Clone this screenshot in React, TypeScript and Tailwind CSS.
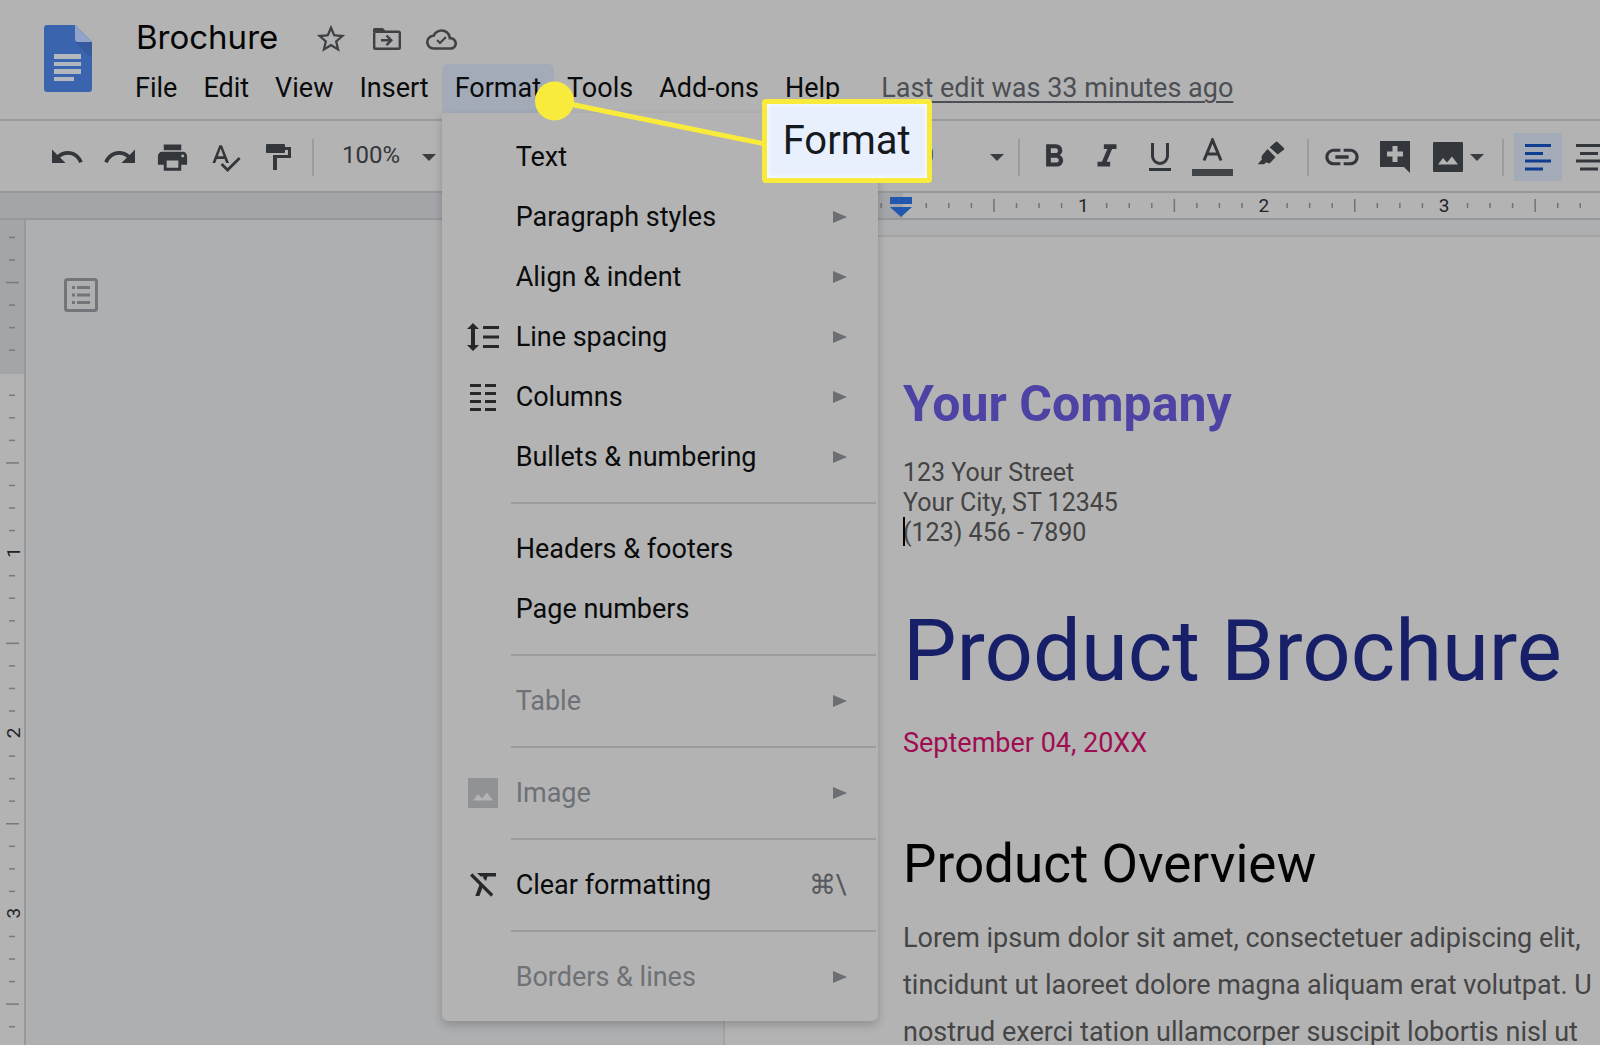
import type { ReactNode } from "react"
import {
  MdCloudQueue,
  MdFormatBold,
  MdFormatItalic,
  MdLink,
  MdPrint,
  MdRedo,
  MdSpellcheck,
  MdStarBorder,
  MdUndo,
} from "react-icons/md"

type MenuEntry =
  | { kind: "separator" }
  | {
      kind: "item"
      label: string
      icon?: ReactNode
      submenu?: boolean
      shortcut?: string
      disabled?: boolean
    }

const INCH = 180.4

function DocsLogo() {
  return (
    <svg width="48" height="67" viewBox="0 0 48 67" aria-hidden>
      <path d="M3 0h28l17 17v47a3 3 0 0 1-3 3H3a3 3 0 0 1-3-3V3a3 3 0 0 1 3-3z" fill="#3b64ae" />
      <path d="M31 17h17v16z" fill="#355a9d" />
      <path d="M31 0l17 17H34a3 3 0 0 1-3-3z" fill="#91a3c9" />
      <path d="M10 29h27v5H10zM10 37h27v4H10zM10 44h27v5H10zM10 52h20v4H10z" fill="#b3b7be" />
    </svg>
  )
}

function MoveFolder() {
  return (
    <svg width="28" height="22" viewBox="0 0 28 22" fill="none" stroke="currentColor" aria-hidden>
      <path d="M1.2 4.500v15q0 1.300 1.300 1.300h23q1.300 0 1.300-1.300V5q0-1.300-1.300-1.300H1.500" strokeWidth="2.400" />
      <path d="M1.500 0H10l2.500 3v1.500H0v-3Q0 0 1.500 0z" fill="currentColor" stroke="none" />
      <path d="M8 12.300h10M13.500 7.500l4.800 4.800-4.800 4.800" strokeWidth="2.400" />
    </svg>
  )
}

function CloudDone() {
  return (
    <span className="relative block">
      <MdCloudQueue size={31} />
      <svg className="absolute inset-0" width="31" height="31" viewBox="0 0 31 31" fill="none" stroke="currentColor" strokeWidth="2">
        <path d="M11 16l3 3 6-6" />
      </svg>
    </span>
  )
}

function ClearFormat() {
  return (
    <svg width="26" height="24" viewBox="0 0 26 24" aria-hidden>
      <path d="M1.200 1.500l21 21" fill="none" stroke="currentColor" strokeWidth="3.200" />
      <path d="M7 0h19v3.600h-8.500L16 8l-3-3 .6-1.400H10.600zM9.800 10.800l3 3L9.400 23H5.300z" fill="currentColor" />
    </svg>
  )
}

function PaintRoller() {
  return (
    <svg width="25" height="27" viewBox="0 0 25 27" aria-hidden>
      <path d="M1 0h17a1 1 0 0 1 1 1v2h6v11H11v12H7V11h15V6h-3v2a1 1 0 0 1-1 1H1a1 1 0 0 1-1-1V1a1 1 0 0 1 1-1z" fill="currentColor" />
    </svg>
  )
}

function Highlighter() {
  return (
    <svg width="28" height="24" viewBox="0 0 28 24" fill="currentColor" aria-hidden>
      <path d="M12.7 6.3L18.6 1q1-.8 2 0l6.2 6q.9.9 0 1.800L20.700 13.600z" />
      <path d="M10.500 8l8 8.200-5.200 5.600q-1.200 1-2.400.3L9.300 21.200l-2.300 2.100H.700L5 18.300q-1-2 .4-4.300z" />
    </svg>
  )
}

function CommentPlus() {
  return (
    <svg width="30" height="32" viewBox="0 0 30 32" aria-hidden>
      <path d="M0 0h30v32l-6-6H0z" fill="currentColor" />
      <path d="M12.500 5h5v5.500H23v5h-5.500V21h-5v-5.500H7v-5h5.500z" fill="#b3b3b3" />
    </svg>
  )
}

function Picture() {
  return (
    <svg width="30" height="30" viewBox="0 0 30 30" aria-hidden>
      <rect width="30" height="30" rx="1" fill="currentColor" />
      <path d="M5 22.500l5-6.500 4 4.500 5-6 6 8z" fill="#b3b3b3" />
    </svg>
  )
}

function LineSpacing() {
  return (
    <svg width="32" height="28" viewBox="0 0 32 28" fill="currentColor" aria-hidden>
      <path d="M6 0l6 6H8v16h4l-6 6-6-6h4V6H0z" />
      <path d="M16 3h16v3H16zM16 12.500h16v3H16zM16 22h16v3H16z" />
    </svg>
  )
}

function Columns() {
  return (
    <svg width="26" height="27" viewBox="0 0 26 27" fill="currentColor" aria-hidden>
      <path d="M0 0h11v3H0zM15 0h11v3H15zM0 8h11v3H0zM15 8h11v3H15zM0 16h11v3H0zM15 16h11v3H15zM0 24h11v3H0zM15 24h11v3H15z" />
    </svg>
  )
}

function Caret() {
  return (
    <svg width="14" height="7" viewBox="0 0 14 7" className="pointer-events-none shrink-0" aria-hidden>
      <path d="M0 0h14L7 7z" fill="#3a3d40" />
    </svg>
  )
}

function Outline() {
  return (
    <svg width="34" height="34" viewBox="0 0 34 34" aria-hidden>
      <rect x="1.500" y="1.500" width="31" height="31" rx="2" fill="none" stroke="currentColor" strokeWidth="3" />
      <path d="M8 8h3v3H8zM13 8h13v3H13zM8 15.500h3v3H8zM13 15.500h13v3H13zM8 23h3v3H8zM13 23h13v3H13z" fill="currentColor" />
    </svg>
  )
}

const ENTRIES: MenuEntry[] = [
  { kind: "item", label: "Text", submenu: true },
  { kind: "item", label: "Paragraph styles", submenu: true },
  { kind: "item", label: "Align & indent", submenu: true },
  { kind: "item", label: "Line spacing", icon: <LineSpacing />, submenu: true },
  { kind: "item", label: "Columns", icon: <Columns />, submenu: true },
  { kind: "item", label: "Bullets & numbering", submenu: true },
  { kind: "separator" },
  { kind: "item", label: "Headers & footers" },
  { kind: "item", label: "Page numbers" },
  { kind: "separator" },
  { kind: "item", label: "Table", submenu: true, disabled: true },
  { kind: "separator" },
  { kind: "item", label: "Image", icon: <Picture />, submenu: true, disabled: true },
  { kind: "separator" },
  { kind: "item", label: "Clear formatting", icon: <ClearFormat />, shortcut: "⌘\\" },
  { kind: "separator" },
  { kind: "item", label: "Borders & lines", submenu: true, disabled: true },
]

function FormatMenu() {
  return (
    <div
      role="menu"
      className="absolute left-0 top-full z-20 w-[436px] rounded-b-md bg-[#b3b3b3] py-[14px] shadow-[0_4px_10px_rgba(0,0,0,0.2)]"
    >
      {ENTRIES.map((entry, index) =>
        entry.kind === "separator" ? (
          <div key={index} className="my-[15px] ml-[69px] mr-[2px] h-[2px] bg-[#9b9c9e]" />
        ) : (
          <button
            key={index}
            type="button"
            role="menuitem"
            disabled={entry.disabled}
            className="flex h-[60px] w-full items-center pr-[31px] text-left text-[#0a0b0c] disabled:text-[#6e7175]"
          >
            <span
              className={[
                "flex w-[74px] shrink-0 justify-center pl-[8px]",
                entry.disabled ? "text-[#909295]" : "text-[#26292b]",
              ].join(" ")}
            >
              {entry.icon}
            </span>
            <span className="flex-1">{entry.label}</span>
            {entry.shortcut && <span className="text-[#55585c]">{entry.shortcut}</span>}
            {entry.submenu && (
              <svg width="14" height="12" viewBox="0 0 14 12" aria-hidden>
                <path d="M0 0l14 6-14 6z" fill="#6b6e72" />
              </svg>
            )}
          </button>
        )
      )}
    </div>
  )
}

/* The yellow dot, leader line and enlarged label that point at the open menu */
function Callout() {
  return (
    <div className="pointer-events-none absolute left-[93px] top-[17px] z-30 h-[104px] w-[397px]">
      <svg className="absolute inset-0" width="240" height="80" viewBox="0 0 240 80" aria-hidden>
        <path d="M20 20l210 43" stroke="#f9eb3c" strokeWidth="5" />
        <circle cx="19.500" cy="20" r="19.500" fill="#f9eb3c" />
      </svg>
      <div className="absolute left-[227px] top-[18px] flex h-[84px] w-[170px] items-center justify-center rounded-sm border-[5px] border-[#f9eb3c] bg-[#e8f0fe] text-[40px] leading-none text-[#16191d] shadow-[inset_0_0_6px_#ffffff]">
        Format
      </div>
    </div>
  )
}

function MenuBar() {
  return (
    <nav className="flex h-[49px] items-stretch whitespace-nowrap text-[27px] text-[#0a0b0c]">
      {["File", "Edit", "View", "Insert"].map((name) => (
        <button key={name} type="button" className="px-[13px]">
          {name}
        </button>
      ))}
      <div className="relative">
        <button type="button" aria-expanded className="h-full rounded-t-md bg-[#a3abb9] px-[13px]">
          Format
        </button>
        <FormatMenu />
        <Callout />
      </div>
      {["Tools", "Add-ons", "Help"].map((name) => (
        <button key={name} type="button" className="px-[13px]">
          {name}
        </button>
      ))}
      <a href="#history" className="ml-[28px] self-center text-[#4c4f53] underline decoration-2 underline-offset-4">
        Last edit was 33 minutes ago
      </a>
    </nav>
  )
}

function Header() {
  return (
    <header className="flex h-[121px] border-b-2 border-[#999a9b] pl-11">
      <div className="pt-[25px]">
        <DocsLogo />
      </div>
      <div className="ml-[30px] flex flex-col pt-[14px]">
        <div className="flex h-[50px] items-center pl-[14px]">
          <h1 className="pb-1 font-[Inter] text-[33px] leading-none text-[#050505]">Brochure</h1>
          <div className="ml-9 flex items-center gap-[25px] text-[#3f4245]">
            <button type="button" aria-label="Star">
              <MdStarBorder size={34} />
            </button>
            <button type="button" aria-label="Move">
              <MoveFolder />
            </button>
            <button type="button" aria-label="Saved to Drive">
              <CloudDone />
            </button>
          </div>
        </div>
        <MenuBar />
      </div>
    </header>
  )
}

function Tool({ label, children }: { label: string; children: ReactNode }) {
  return (
    <button type="button" aria-label={label} className="flex h-12 w-[53px] shrink-0 items-center justify-center">
      {children}
    </button>
  )
}

function Divider() {
  return <div className="h-[37px] w-[2px] shrink-0 bg-[#9b9c9e]" />
}

function Toolbar() {
  return (
    <div className="flex h-[72px] items-center overflow-hidden border-b-2 border-[#97989a] pl-10 pt-[2px] text-[#33363a]">
      <Tool label="Undo"><MdUndo size={36} /></Tool>
      <Tool label="Redo"><MdRedo size={36} /></Tool>
      <Tool label="Print"><MdPrint size={35} /></Tool>
      <Tool label="Spelling and grammar check"><MdSpellcheck size={33} /></Tool>
      <Tool label="Paint format"><PaintRoller /></Tool>
      <div className="ml-[7px] flex"><Divider /></div>
      <div className="ml-[28px] flex w-[94px] shrink-0 items-center justify-between">
        <select aria-label="Zoom" className="w-[64px] appearance-none bg-transparent pb-1 text-[24px]">
          <option>100%</option>
        </select>
        <Caret />
      </div>
      <div className="ml-[471px] flex w-[97px] shrink-0 items-center justify-between">
        <select aria-label="Font size" className="w-[36px] appearance-none bg-transparent pb-1 text-[24px]">
          <option>10</option>
        </select>
        <Caret />
      </div>
      <div className="ml-[14px] mr-[7px] flex"><Divider /></div>
      <Tool label="Bold"><MdFormatBold size={38} /></Tool>
      <Tool label="Italic"><MdFormatItalic size={38} /></Tool>
      <Tool label="Underline">
        <svg width="22" height="28" viewBox="0 0 22 28" aria-hidden>
          <path d="M3.500 0v13a7.500 7.500 0 0 0 15 0V0" fill="none" stroke="currentColor" strokeWidth="3" />
          <path d="M0 25h22v3H0z" fill="currentColor" />
        </svg>
      </Tool>
      <Tool label="Text color">
        <svg width="41" height="38" viewBox="0 0 41 38" aria-hidden>
          <path d="M12 22.500L20.500 2 29 22.500M14.500 16h12" fill="none" stroke="currentColor" strokeWidth="3" />
          <path d="M0 31h41v7H0z" fill="#414446" />
        </svg>
      </Tool>
      <button
        type="button"
        aria-label="Highlight color"
        className="flex h-12 w-[60px] shrink-0 items-center justify-center pb-2 pl-[4px]"
      >
        <Highlighter />
      </button>
      <div className="ml-[8px] mr-[6px] flex"><Divider /></div>
      <Tool label="Insert link"><MdLink size={40} /></Tool>
      <Tool label="Add comment"><CommentPlus /></Tool>
      <Tool label="Insert image"><Picture /></Tool>
      <div className="-ml-1 flex"><Caret /></div>
      <div className="ml-[18px] mr-[10px] flex"><Divider /></div>
      <button
        type="button"
        aria-label="Left align"
        aria-pressed
        className="flex size-12 shrink-0 items-center justify-center bg-[#a3abb9] text-[#0f3d8f]"
      >
        <svg width="26" height="27" viewBox="0 0 26 27" fill="currentColor" aria-hidden>
          <path d="M0 0h26v3H0zM0 8h18v3H0zM0 15.500h26v3H0zM0 23.500h18v3H0z" />
        </svg>
      </button>
      <Tool label="Center align">
        <svg width="26" height="27" viewBox="0 0 26 27" fill="currentColor" aria-hidden>
          <path d="M0 0h26v3H0zM4 8h18v3H4zM0 15.500h26v3H0zM4 23.500h18v3H4z" />
        </svg>
      </Tool>
    </div>
  )
}

function HorizontalRuler() {
  const eighths = Array.from({ length: 33 }, (_, i) => i - 1).filter((i) => i !== 0)
  return (
    <div className="flex h-[27px] overflow-hidden border-b-2 border-[#97989a] bg-[#a3a5a8]">
      <svg className="ml-[723px] shrink-0" width="900" height="25" aria-hidden>
        <rect x="180" width="720" height="25" fill="#b3b3b3" />
        {eighths.map((i) => {
          const x = 180 + (i * INCH) / 8
          if (i % 8 === 0) {
            return (
              <text key={i} x={x} y="19" textAnchor="middle" fontSize="19" fill="#242428">
                {i / 8}
              </text>
            )
          }
          const long = i % 4 === 0
          return <rect key={i} x={x} y={long ? 6 : 10} width="1.500" height={long ? 13 : 5} fill="#707274" />
        })}
        <path d="M167 4h22v7h-22zM167 14h22l-11 10z" fill="#2158ad" />
      </svg>
    </div>
  )
}

function VerticalRuler() {
  const eighths = Array.from({ length: 37 }, (_, i) => i - 6).filter((i) => i !== 0)
  return (
    <div className="w-[26px] shrink-0 border-r-2 border-[#97989a] bg-[#b3b3b3]">
      <svg className="overflow-visible" width="24" height="825" aria-hidden>
        <rect width="24" height="154" fill="#a3a5a8" />
        {eighths.map((i) => {
          const y = 153 + (i * INCH) / 8
          if (i > 0 && i % 8 === 0) {
            return (
              <text key={i} transform={`translate(20 ${y - 1}) rotate(-90)`} textAnchor="middle" fontSize="19" fill="#242428">
                {i / 8}
              </text>
            )
          }
          const long = i % 4 === 0
          return <rect key={i} x={long ? 6 : 9} y={y - 1} width={long ? 13 : 6} height="1.500" fill="#77797b" />
        })}
      </svg>
    </div>
  )
}

function Page() {
  return (
    <article className="mt-[15px] flex-1 overflow-hidden whitespace-nowrap border-l-2 border-t-2 border-[#a3a4a6] bg-[#b3b3b3] pl-[178px] pt-[139px]">
      <h2 className="text-[50px] font-bold leading-[56px] text-[#4d43a4]">Your Company</h2>
      <address className="mt-[26px] text-[25px] not-italic leading-[30px] text-[#434343]">
        123 Your Street
        <br />
        Your City, ST 12345
        <br />
        <span className="relative">
          <span className="absolute -top-px left-0 h-[29px] w-[2px] bg-black" />
          (123) 456 - 7890
        </span>
      </address>
      <h1 className="mt-[53px] text-[85px] leading-[100px] text-[#161f68]">Product Brochure</h1>
      <p className="mt-[26px] text-[27px] leading-[32px] text-[#a00c52]">September 04, 20XX</p>
      <h3 className="mt-[75px] text-[53px] leading-[60px] text-[#030303]">Product Overview</h3>
      <p className="mt-[21px] text-[27px] leading-[47px] text-[#454545]">
        Lorem ipsum dolor sit amet, consectetuer adipiscing elit,
        <br />
        tincidunt ut laoreet dolore magna aliquam erat volutpat. U
        <br />
        nostrud exerci tation ullamcorper suscipit lobortis nisl ut
      </p>
    </article>
  )
}

export default function App() {
  return (
    <div className="flex h-screen flex-col overflow-hidden bg-[#b3b3b3] font-[Roboto,sans-serif]">
      <Header />
      <Toolbar />
      <HorizontalRuler />
      <main className="flex min-h-0 flex-1 bg-[#adafb1]">
        <VerticalRuler />
        <aside className="w-[697px] shrink-0 pl-[38px] pt-[58px] text-[#74757a]">
          <button type="button" aria-label="Show document outline">
            <Outline />
          </button>
        </aside>
        <Page />
      </main>
    </div>
  )
}
